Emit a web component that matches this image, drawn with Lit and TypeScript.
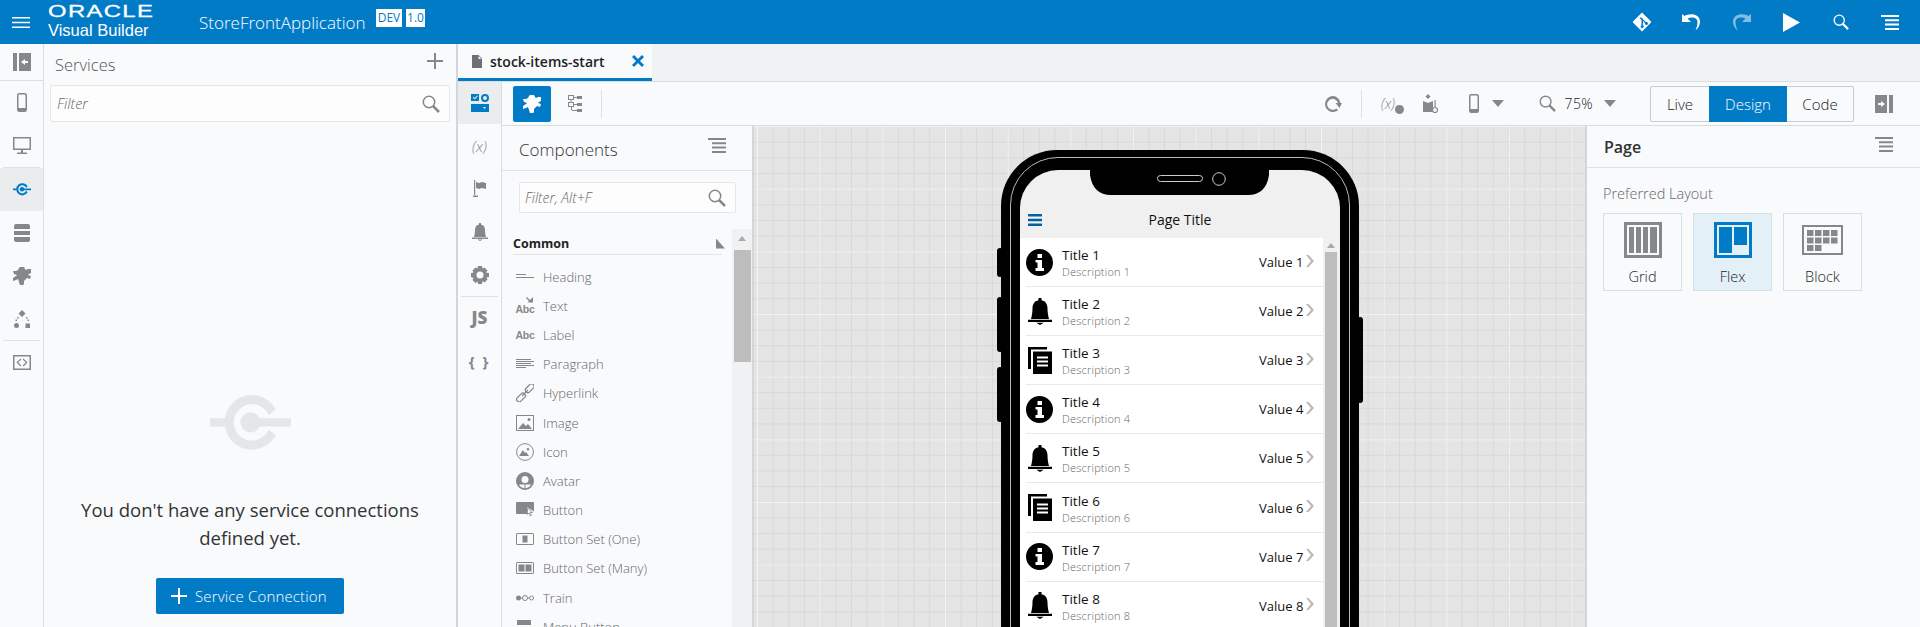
import { LitElement, html, css, svg } from "lit";
import { customElement } from "lit/decorators.js";

const ic = (w: number, h: number, body: unknown, cls = "") =>
  html`<svg class="ic ${cls}" width=${w} height=${h} viewBox="0 0 ${w} ${h}" fill="currentColor">${body}</svg>`;

const puzzlePath =
  "M6 1L7 0H11L12 2L13 3L15 2H18V6L16 7L15 8L18 9L17 12L14 11L13 12L11 14V17L10 18H7L6 15L5 12L3 13L0 14V11L3 9L4 8L1 7L0 4H3L5 3Z";

const icons = {
  collapse: () => ic(18, 18, svg`<path d="M0 0h4v18H0zM6 0h12v18H6zM8 9l4-3v2h3v2h-3v2z" fill-rule="evenodd"/>`),
  expand: () => ic(18, 18, svg`<path d="M14 0h4v18h-4zM0 0h12v18H0zM10 9L6 6v2H3v2h3v2z" fill-rule="evenodd"/>`),
  phone: () => ic(10, 19, svg`<rect x=".75" y=".75" width="8.500" height="17.500" rx="1.500" fill="none" stroke="currentColor" stroke-width="1.500"/><path d="M1 15h8v3H1z"/>`),
  desktop: () => ic(18, 17, svg`<path d="M0 0h18v13H0zM1.500 1.500v10h15v-10zM8 13h2v2.500H8zM4 15.500h10V17H4z" fill-rule="evenodd"/>`),
  service: (s = 18) => html`<svg class="ic" width=${s} height=${s * 0.7} viewBox="0 0 80 54" fill="currentColor"><path d="M0 23h16v8H0zM42 23h38v8H42z" /><circle cx="40" cy="27" r="10"/><path d="M65 14A27 27 0 1 0 65 40L58 34A18 18 0 1 1 58 20z"/></svg>`,
  db: () => ic(16, 18, svg`<path d="M2 0h12q2 0 2 2v3H0V2q0-2 2-2zM0 7h16v4H0zM0 13h16v3q0 2-2 2H2q-2 0-2-2z"/>`),
  puzzle: () => ic(18, 18, svg`<path d=${puzzlePath}/>`),
  flow: () => ic(16, 18, svg`<path d="M8 0l3.500 3.500L8 7 4.500 3.500zM2.500 13a2.500 2.500 0 1 1 0 5 2.500 2.500 0 0 1 0-5zM11.500 13.500H16V18h-4.500zM3 7h1.500v1.500H3zM1.500 9.500H3V11H1.500zM12 7h1.500v1.500H12zM13.500 9.500H15V11h-1.500z"/>`),
  code: () => ic(18, 15, svg`<path d="M0 0h18v15H0zM1.500 1.500v12h15v-12zM7.500 3.500L3.500 7.500l4 4 .8-1-3-3 3-3zM10.500 3.500l4 4-4 4-.8-1 3-3-3-3z" fill-rule="evenodd"/>`),
  file: () => ic(10, 13, svg`<path d="M0 0h6.500L10 3.500V13H0zM6.500 1v3h3z" fill-rule="evenodd"/>`),
  close: () => ic(12, 12, svg`<path d="M2 0l4 4 4-4 2 2-4 4 4 4-2 2-4-4-4 4-2-2 4-4-4-4z"/>`),
  comps: () => ic(18, 18, svg`<path d="M0 0h8v7H0zM1.800 3.500l2 2L7 2l-.8-.6L3.800 4 2.500 2.800zM14 0a4 4 0 1 1 0 8 4 4 0 0 1 0-8zm0 2a2 2 0 1 0 0 4 2 2 0 0 0 0-4zM0 10h18v8H0zm12 3l1.500 2 1.500-2z" fill-rule="evenodd"/>`),
  flag: () => ic(14, 18, svg`<path d="M1 0h1.200v15H1zM0 15.500h5V17H0zM3 2l3 1 3-1 4 1v6l-4-1-3 1-3-1z"/>`),
  bell: (s = 16) => html`<svg class="ic" width=${s} height=${s * 1.125} viewBox="0 0 16 18" fill="currentColor"><path d="M7 0h2v1.500C12 2 13 4.500 13 7c0 3 .5 5 1 7H2c.5-2 1-4 1-7 0-2.500 1-5 4-5.500zM0 14.500h16V16H0zM5.500 16.500h5L8 18z"/></svg>`,
  gear: () => ic(18, 18, svg`<path d="M7 0h4l.5 2.500 2-1 3 3-1.500 2L18 7v4l-2.500.5 1 2-3 3-2-1.500L11 18H7l-.5-2.500-2 1.500-3-3 1-2L0 11V7l2.500-.5-1-2 3-3 2 1zM9 5.500a3.500 3.500 0 1 0 0 7 3.500 3.500 0 0 0 0-7z" fill-rule="evenodd"/>`),
  search: (s = 18) => html`<svg class="ic" width=${s} height=${s} viewBox="0 0 18 18" fill="none" stroke="currentColor"><circle cx="7" cy="7" r="5.700" stroke-width="1.500"/><path d="M11 11l6 6" stroke-width="2.500"/></svg>`,
  plus: (s = 16) => html`<svg class="ic" width=${s} height=${s} viewBox="0 0 16 16" fill="currentColor"><path d="M7 0h2v7h7v2H9v7H7V9H0V7h7z"/></svg>`,
  menu: () => ic(18, 15, svg`<path d="M0 0h18v2H0zM4 4.300h14v2H4zM4 8.600h14v2H4zM4 13h14v2H4z"/>`),
  burger: () => ic(18, 11, svg`<path d="M0 0h18v1.500H0zM0 4.700h18v1.500H0zM0 9.500h18V11H0z"/>`),
  git: () => ic(20, 20, svg`<path d="M10 .5l9 9a.8.8 0 0 1 0 1l-9 9-9-9a.8.8 0 0 1 0-1zM8.500 5l-1 1 2 2v5.300a1.500 1.500 0 1 0 1.500 0V9l2 2a1.500 1.500 0 1 0 1-1L11 7.500A1.500 1.500 0 0 0 9 6z" fill-rule="evenodd"/>`),
  undo: () => ic(19, 18, svg`<path d="M0 9V1l2.500 2C7 0 18 0 18 9c0 3-2 6.500-4.500 8.500 1-2.500 2-5.500 2-8.500 0-4.500-6-5.500-10-3.500L9 9z"/>`),
  redo: () => ic(19, 18, svg`<path d="M19 9V1l-2.500 2C12 0 1 0 1 9c0 3 2 6.500 4.500 8.500-1-2.500-2-5.500-2-8.500 0-4.500 6-5.500 10-3.500L10 9z"/>`),
  play: () => ic(17, 19, svg`<path d="M0 0l17 9.500L0 19z"/>`),
  refresh: () => ic(18, 18, svg`<path d="M9 1a8 8 0 1 0 5 14.300l-1.600-1.900A5.500 5.500 0 1 1 14 8h-2.500l4 5 2.500-5h-1.500A8 8 0 0 0 9 1z"/>`),
  person: () => ic(16, 20, svg`<path d="M5 0l2.500 2.500L5 5 2.500 2.500zM0 7l5 2 5-2v11H0z"/><path d="M11.500 6h1.200v7h-1.200z"/><circle cx="12" cy="16" r="2.500" fill="none" stroke="currentColor" stroke-width="1.200"/>`),
  heading: () => ic(18, 8, svg`<path d="M0 1h10v1H0zM0 4h18v1H0z" />`),
  abcArrow: () => html`<span class="abc-wrap">${ic(7, 7, svg`<path d="M7 0v5.500H1.500L3 4 0 1l1-1 3 3z"/>`, "abc-arrow")}<span class="abc">Abc</span></span>`,
  abc: () => html`<span class="abc">Abc</span>`,
  para: () => ic(18, 10, svg`<path d="M0 0h15v1H0zM0 2h18v1H0zM0 4h15v1H0zM0 6h18v1H0zM0 8h10v1H0z"/>`),
  link: () => ic(18, 18, svg`<g fill="none" stroke="currentColor" stroke-width="1.300"><rect x="8" y="1" width="10" height="5" rx="2" transform="rotate(-45 13 3.500) translate(0 1)"/><rect x="0" y="11" width="10" height="5" rx="2" transform="rotate(-45 5 13.500)"/><path d="M6 12l6-6"/></g>`),
  image: () => ic(18, 16, svg`<path d="M0 0h18v16H0zM1 1v14h16V1zM2 14l5-6 3 3 2-2 4 5zM13 3a1.500 1.500 0 1 1 0 3 1.500 1.500 0 0 1 0-3z" fill-rule="evenodd"/>`),
  icon: () => ic(18, 18, svg`<circle cx="9" cy="9" r="8.400" fill="none" stroke="currentColor"/><path d="M3 13l4-6 2 3 1-1 3 4zM12 5a1.300 1.300 0 1 1 0 2.600A1.300 1.300 0 0 1 12 5z"/>`),
  avatar: () => ic(18, 18, svg`<path d="M9 0a9 9 0 1 1 0 18A9 9 0 0 1 9 0zM9 4a3.500 3.500 0 1 0 0 7 3.500 3.500 0 0 0 0-7zM3 12.500c1 2 3 3.400 5.500 3.800V12.500zM15 12.500H9.500v3.800c2.500-.4 4.500-1.800 5.500-3.800z" fill-rule="evenodd"/>`),
  button: () => ic(18, 16, svg`<path d="M1 0h16q1 0 1 1v8.500L11 5v7H1q-1 0-1-1V1q0-1 1-1z"/><path d="M11.500 6l5 4.500h-2.500l1.500 3-1 .5-1.500-3-1.500 1.500z" fill="none" stroke="currentColor" stroke-width=".8"/>`),
  setOne: () => ic(18, 12, svg`<path d="M1.500 0h15Q18 0 18 1.500v9q0 1.500-1.500 1.500h-15Q0 12 0 10.500v-9Q0 0 1.500 0zM1 1v10h16V1zM6.500 2.500h5v7h-5z" fill-rule="evenodd"/>`),
  setMany: () => ic(18, 12, svg`<path d="M1.500 0h15Q18 0 18 1.500v9q0 1.500-1.500 1.500h-15Q0 12 0 10.500v-9Q0 0 1.500 0zM1 1v10h16V1zM2.500 2.500h6v7h-6zM9.500 2.500h6v7h-6z" fill-rule="evenodd"/>`),
  train: () => ic(18, 6, svg`<circle cx="2.500" cy="3" r="2.500"/><path d="M5 2.500h13v1H5z"/><circle cx="9" cy="3" r="2.500" stroke="currentColor" fill="#f9fafc"/><circle cx="15.500" cy="3" r="2" stroke="currentColor" fill="#f9fafc"/>`),
  menuBtn: () => ic(18, 14, svg`<path d="M1 0h14v5H1zM0 7h18v3H0zM0 11h2v3H0z"/>`),
  tree: () => ic(14, 18, svg`<path d="M0 0h6v5H0zm1 1v3h4V1zM9 1h5v3H9zM0 7h6v5H0zm1 1v3h4V8zM9 8h5v3H9zM9 14h5v3H9zM2.500 5h1v2h-1zM3 12h1v3H3zM6 2h3v1H6zM6 9h3v1H6zM4 15h5v1H4z" fill-rule="evenodd"/>`),
  info: () => html`<svg class="ic" width="27" height="27" viewBox="0 0 27 27" fill="currentColor"><path fill-rule="evenodd" d="M13.500 0a13.500 13.500 0 1 1 0 27 13.500 13.500 0 0 1 0-27zM11.500 5v4h4.500V5zM9.500 11v2.500h2V19h-2v3h8.500v-3h-2v-8z"/></svg>`,
  docs: () => ic(24, 27, svg`<path fill-rule="evenodd" d="M0 0h19v2.500H3V22H0zM5 4.500h19V27H5zM9 9.500v2h11v-2zM9 13.500v2h11v-2zM9 17.500v2h11v-2z"/>`),
  chevron: () => ic(8, 12, svg`<path d="M0 0h2.500L8 6l-5.500 6H0l5-6z"/>`),
};

const components: [string, () => unknown][] = [
  ["Heading", icons.heading],
  ["Text", icons.abcArrow],
  ["Label", icons.abc],
  ["Paragraph", icons.para],
  ["Hyperlink", icons.link],
  ["Image", icons.image],
  ["Icon", icons.icon],
  ["Avatar", icons.avatar],
  ["Button", icons.button],
  ["Button Set (One)", icons.setOne],
  ["Button Set (Many)", icons.setMany],
  ["Train", icons.train],
  ["Menu Button", icons.menuBtn],
];

const rowIcons = [icons.info, () => icons.bell(24), icons.docs];
const rows = Array.from({ length: 9 }, (_, i) => i + 1);

@customElement("app-root")
export class AppRoot extends LitElement {
  static styles = css`
    :host {
      display: block;
      width: 1920px;
      height: 627px;
      overflow: hidden;
      font-family: "Open Sans", "Noto Sans", sans-serif;
      color: #333;
      background: #f9fafc;
    }
    .ic { display: block; flex: none; }

    .top {
      height: 44px;
      background: #027bc7;
      color: #fff;
      display: flex;
      align-items: center;
    }
    .burger { margin-left: 12px; width: 18px; }
    .logo { margin-left: 18px; width: 118px; display: flex; flex-direction: column; }
    .oracle {
      font: 400 17px/14px "Liberation Sans", sans-serif;
      letter-spacing: 1px;
      transform: scaleX(1.4);
      transform-origin: 0 50%;
      margin-top: -1px;
      -webkit-text-stroke: 0.3px #fff;
    }
    .vb { font: 16.500px/17px "Liberation Sans", sans-serif; margin-top: 3px; white-space: nowrap; }
    .app { margin-left: 33px; font-size: 17px; font-weight: 300; width: 177px; }
    .badge {
      background: #fff;
      color: #027bc7;
      height: 18px;
      font-size: 12px;
      line-height: 18px;
      text-align: center;
      margin-top: -8px;
      margin-right: 4px;
    }
    .badge.dev { width: 26px; }
    .badge.ver { width: 19px; }
    .top-actions { margin-left: auto; display: flex; align-items: center; margin-right: 5px; }
    .top-cell { width: 49.600px; display: flex; justify-content: center; }
    .dim { opacity: 0.5; }

    .main { display: flex; height: 583px; }

    .rail {
      width: 43px;
      flex: none;
      border-right: 1px solid #d8dee4;
      display: flex;
      flex-direction: column;
      align-items: stretch;
      color: #85888b;
    }
    .rail-item {
      height: 43px;
      flex: none;
      display: flex;
      align-items: center;
      justify-content: center;
    }
    .rail-item.first { height: 36px; border-bottom: 1px solid #d8dee4; }
    .rail-item.active { background: #ebecee; color: #027bc7; }
    .rail-sep { height: 1px; background: #dfe1e4; margin: 0 3px; flex: none; }

    .services {
      width: 412px;
      flex: none;
      border-right: 2px solid #d3d6da;
      background: #f9fafc;
      display: flex;
      flex-direction: column;
    }
    .svc-head {
      height: 41px;
      display: flex;
      align-items: center;
      justify-content: space-between;
      padding: 0 13px 0 11px;
      font-size: 16.500px;
      font-weight: 300;
      color: #555;
      box-sizing: border-box;
    }
    .svc-head .ic { color: #85888b; margin-top: -8px; }
    .filter {
      display: flex;
      align-items: center;
      justify-content: space-between;
      background: #fdfdfd;
      border: 1px solid #e4e6e9;
      border-radius: 2px;
      font-size: 14.500px;
      font-style: italic;
      font-weight: 300;
      color: #666;
      box-sizing: border-box;
      padding: 0 9px 0 6px;
    }
    .filter .ic { color: #85888b; }
    .svc-filter { height: 37px; margin: 0 6px; }
    .empty {
      flex: 1;
      display: flex;
      flex-direction: column;
      align-items: center;
      color: #e5e6e7;
      padding-top: 272px;
    }
    .empty-msg {
      width: 360px;
      text-align: center;
      font-size: 18.500px;
      line-height: 28px;
      color: #333;
      margin-top: 45px;
    }
    .cta {
      margin-top: 26px;
      width: 188px;
      height: 36px;
      background: #027bc7;
      border-radius: 2px;
      color: #fff;
      display: flex;
      align-items: center;
      gap: 8px;
      padding-left: 15px;
      box-sizing: border-box;
      font-size: 15px;
      letter-spacing: 0.15px;
      font-weight: 300;
      white-space: nowrap;
    }

    .editor { flex: 1; min-width: 0; display: flex; flex-direction: column; }
    .tabs {
      height: 37px;
      flex: none;
      background: #f1f2f4;
      border-bottom: 1px solid #d8dce0;
    }
    .tab {
      width: 194px;
      height: 37px;
      background: #f9fafc;
      border-bottom: 3px solid #027bc7;
      box-sizing: border-box;
      display: flex;
      align-items: center;
      padding-left: 14px;
      font-size: 14px;
      font-weight: 600;
      color: #222;
      white-space: nowrap;
    }
    .tab .file { color: #6d6f72; margin-right: 8px; display: flex; }
    .tab .x { color: #027bc7; margin-left: auto; margin-right: 8px; display: flex; }

    .editor-body { flex: 1; display: flex; min-height: 0; }
    .rail2 {
      width: 43px;
      flex: none;
      border-right: 1px solid #d8dee4;
      display: flex;
      flex-direction: column;
      color: #85888b;
    }
    .rail2 .rail-item { font-weight: 700; }
    .rail2 .rail-item.active { height: 42px; }
    .rail2 .var { font: italic 300 15px "Open Sans", sans-serif; }
    .rail2 .rail-item.js { font-size: 17px; font-weight: 800; height: 40px; }
    .rail2 .rail-item.braces { font-size: 15px; letter-spacing: 2px; margin-top: 2px; }

    .work { flex: 1; min-width: 0; display: flex; flex-direction: column; }
    .toolbar {
      height: 44px;
      flex: none;
      box-sizing: border-box;
      border-bottom: 1px solid #d8dce0;
      display: flex;
      align-items: center;
      color: #85888b;
      padding-left: 11px;
    }
    .tool-on {
      width: 38px;
      height: 36px;
      background: #027bc7;
      border-radius: 2px;
      color: #fff;
      display: flex;
      align-items: center;
      justify-content: center;
    }
    .tool-flow { margin-left: 17px; }
    .vsep { width: 1px; height: 28px; background: #dcdee1; flex: none; }
    .vsep.flow-sep { margin-left: 19px; }
    .vsep.refresh-sep { margin: 0 6px 0 19px; }
    .tri {
      width: 0;
      height: 0;
      border: 6px solid transparent;
      border-top: 7px solid #85888b;
      border-bottom: 0;
    }
    .tool-right { margin-left: auto; display: flex; align-items: center; }
    .tool-cell { width: 45px; display: flex; justify-content: center; position: relative; }
    .tool-cell.tool-var { width: 41px; font: italic 300 14px "Open Sans", sans-serif; }
    .var-dot {
      position: absolute;
      left: 27px;
      top: 11px;
      width: 9px;
      height: 9px;
      border-radius: 50%;
      background: #85888b;
    }
    .tool-phone { margin: 0 13px 0 15px; }
    .tool-search { margin-left: 35px; }
    .zoom-val { font-size: 14px; color: #222; font-weight: 300; margin: 0 11px 0 9px; letter-spacing: 0.4px; }
    .seg {
      display: flex;
      height: 36px;
      border: 1px solid #c9cbce;
      border-radius: 2px;
      box-sizing: border-box;
      font-size: 15px;
      color: #222;
      font-weight: 300;
      width: 204px;
      margin-left: 34px;
      background: #f9fafc;
    }
    .seg div { display: flex; align-items: center; justify-content: center; }
    .seg .live { width: 58px; }
    .seg .design { width: 78px; background: #027bc7; color: #fff; margin: -1px 0; }
    .seg .code { flex: 1; }
    .tool-expand { margin: 0 27px 0 21px; }

    .split { flex: 1; display: flex; min-height: 0; }
    .palette {
      width: 252px;
      flex: none;
      display: flex;
      flex-direction: column;
      background: #f9fafc;
      border-right: 2px solid #d3d6da;
      box-sizing: border-box;
    }
    .pal-head {
      height: 45px;
      flex: none;
      display: flex;
      align-items: center;
      justify-content: space-between;
      padding: 2px 26px 0 17px;
      border-bottom: 1px solid #dfe2e6;
      font-size: 17px;
      font-weight: 300;
      color: #333;
      box-sizing: border-box;
    }
    .pal-head .ic { color: #85888b; margin-top: -7px; }
    .pal-filter { height: 31px; margin: 11px 16px 0 17px; flex: none; font-size: 14px; padding-left: 5px; }
    .pal-body { flex: 1; display: flex; margin-top: 16px; min-height: 0; overflow: hidden; }
    .pal-list { flex: 1; padding: 1px 10px 0 11px; min-width: 0; }
    .pal-section {
      height: 25px;
      display: flex;
      align-items: center;
      justify-content: space-between;
      font-size: 12.500px;
      font-weight: 700;
      color: #222;
      border-bottom: 1px solid #e2e4e7;
      box-sizing: border-box;
      padding-top: 3px;
    }
    .corner { width: 9px; height: 10px; background: #85888b; clip-path: polygon(0 0, 100% 100%, 0 100%); margin-right: -3px; }
    .pal-items { margin-top: 7px; }
    .pal-item {
      height: 29.200px;
      display: flex;
      align-items: center;
      font-size: 13px;
      font-weight: 300;
      color: #63666a;
      white-space: nowrap;
    }
    .pal-icon { width: 18px; margin: 0 9px 0 3px; color: #85888b; display: flex; justify-content: center; flex: none; }
    .abc { font: 700 10.500px/10px "Liberation Sans", sans-serif; letter-spacing: -0.2px; color: #85888b; }
    .abc-wrap { display: flex; flex-direction: column; align-items: flex-end; width: 18px; }
    .abc-wrap .abc { align-self: center; }
    .abc-arrow { margin-right: 1px; }
    .scroll {
      width: 20px;
      flex: none;
      background: #f0f1f2;
      display: flex;
      flex-direction: column;
      align-items: center;
    }
    .scroll .up {
      margin-top: 7px;
      width: 0;
      height: 0;
      border: 4.500px solid transparent;
      border-bottom: 5px solid #a9abad;
      border-top: 0;
    }
    .thumb { width: 17px; height: 112px; background: #bdbdbd; margin-top: 9px; }

    .canvas {
      flex: 1;
      min-width: 0;
      overflow: hidden;
      box-sizing: border-box;
      padding: 24px 0 0 247px;
      background-color: #e4e4e4;
      background-image:
        linear-gradient(#f4f4f4 1px, transparent 1px),
        linear-gradient(90deg, #f4f4f4 1px, transparent 1px),
        linear-gradient(#d7d7d7 1px, transparent 1px),
        linear-gradient(90deg, #d7d7d7 1px, transparent 1px);
      background-size: 62.670px 62.670px, 62.670px 62.670px, 15.667px 15.667px, 15.667px 15.667px;
      background-position: 3px 0, 3px 0, 3px 0, 3px 0;
    }
    .phone {
      position: relative;
      width: 358px;
      height: 720px;
      box-sizing: border-box;
      background: #000;
      border-radius: 56px;
      padding: 7px 9px 0 9px;
    }
    .phone-line {
      border: 1px solid #b9b9b9;
      border-radius: 48px;
      background: #000;
      padding: 12px 9px 0 9px;
      height: 720px;
      box-sizing: border-box;
    }
    .side { position: absolute; background: #000; width: 6px; border-radius: 3px; }
    .side.l { left: -4px; }
    .side.r { right: -4px; }
    .side.a { top: 98px; height: 29px; }
    .side.b { top: 147px; height: 55px; }
    .side.c { top: 217px; height: 55px; }
    .side.d { top: 167px; height: 86px; }
    .screen {
      background: #f0f0f0;
      border-radius: 38px 38px 0 0;
      height: 700px;
      position: relative;
      overflow: hidden;
    }
    .notch { position: absolute; left: 70px; top: 0; display: block; }
    .page-head {
      height: 68px;
      display: flex;
      align-items: center;
      justify-content: center;
      padding-top: 30px;
      box-sizing: border-box;
      position: relative;
      font-size: 14px;
      color: #111;
    }
    .page-menu { position: absolute; left: 8px; top: 44px; color: #05619e; }
    .list-wrap { display: flex; }
    .list { width: 303px; background: #fff; flex: none; }
    .row {
      height: 49.100px;
      display: flex;
      align-items: center;
      box-sizing: border-box;
      margin-left: 6px;
      border-bottom: 1px solid #e9e9e9;
    }
    .row-icon { width: 27px; color: #000; display: flex; justify-content: center; flex: none; }
    .row-text { margin-left: 9px; flex: 1; padding-top: 2px; }
    .row-title { font-size: 13.500px; line-height: 17px; color: #111; }
    .row-desc { font-size: 11px; line-height: 15px; color: #666; font-weight: 300; letter-spacing: 0.2px; }
    .row-val { font-size: 13px; color: #111; margin-right: 6px; width: 41px; white-space: nowrap; }
    .row-chev { color: #b9b9b9; margin-right: 9px; margin-top: -3px; }
    .lscroll { width: 16px; display: flex; flex-direction: column; align-items: center; }
    .lscroll .up { margin-top: 5px; width: 0; height: 0; border: 4px solid transparent; border-bottom: 5px solid #a9a9a9; border-top: 0; }
    .lscroll .bar { width: 12px; height: 400px; background: #bdbdbd; margin-top: 4px; }

    .props {
      flex: none;
      width: 335px;
      box-sizing: border-box;
      border-left: 2px solid #d3d6da;
      background: #f9fafc;
    }
    .props-head {
      height: 42px;
      display: flex;
      align-items: center;
      justify-content: space-between;
      padding: 0 27px 0 17px;
      border-bottom: 1px solid #dfe2e6;
      box-sizing: border-box;
      font-size: 16px;
      font-weight: 600;
      color: #333;
    }
    .props-head .ic { color: #85888b; margin-top: -5px; }
    .props-label { font-size: 14.500px; font-weight: 300; color: #666; margin: 16px 0 0 16px; line-height: 20px; }
    .tiles { display: flex; gap: 11px; margin: 9px 0 0 16px; }
    .tile {
      width: 79px;
      height: 78px;
      box-sizing: border-box;
      border: 1px solid #d5dfe8;
      display: flex;
      flex-direction: column;
      align-items: center;
      font-size: 14.500px;
      font-weight: 300;
      color: #222;
    }
    .tile.on { background: #e4f0f8; }
    .tile-art { height: 52px; display: flex; align-items: center; justify-content: center; color: #85888b; }
    .tile.on .tile-art { color: #027bc7; }
    .tile-name { margin-top: 1px; }
  `;

  private renderRow(n: number) {
    const icon = rowIcons[(n - 1) % 3];
    return html`<div class="row">
      <div class="row-icon">${icon()}</div>
      <div class="row-text">
        <div class="row-title">Title ${n}</div>
        <div class="row-desc">Description ${n}</div>
      </div>
      <div class="row-val">Value ${n}</div>
      <div class="row-chev">${icons.chevron()}</div>
    </div>`;
  }

  private renderPhone() {
    return html`<div class="phone">
      <div class="side l a"></div>
      <div class="side l b"></div>
      <div class="side l c"></div>
      <div class="side r d"></div>
      <div class="phone-line">
        <div class="screen">
          <div class="page-head">
            <div class="page-menu">${ic(14, 12, svg`<path d="M1 0h12a1 1 0 0 1 0 2.600H1a1 1 0 0 1 0-2.600zM0 4.700h14v2.600H0zM1 9.400h12a1 1 0 0 1 0 2.600H1a1 1 0 0 1 0-2.600z"/>`)}</div>
            <div>Page Title</div>
          </div>
          <div class="list-wrap">
            <div class="list">${rows.map((n) => this.renderRow(n))}</div>
            <div class="lscroll"><div class="up"></div><div class="bar"></div></div>
          </div>
          <svg class="notch" width="179" height="25" viewBox="0 0 179 25">
            <path d="M0 0H179V5Q176 25 158 25H21Q3 25 0 5Z" fill="#000"/>
            <rect x="67.500" y="5.500" width="45" height="6" rx="3" fill="none" stroke="#ccc"/>
            <circle cx="129" cy="9" r="6.300" fill="none" stroke="#ccc"/>
          </svg>
        </div>
      </div>
    </div>`;
  }

  private renderGridArt() {
    return ic(38, 36, svg`<path fill-rule="evenodd" d="M0 0h38v36H0zM3 3v30h32V3z"/><path d="M5 5h5v26H5zM12 5h5v26h-5zM19 5h5v26h-5zM26 5h7v26h-7z"/>`);
  }

  private renderFlexArt() {
    return ic(38, 36, svg`<path fill-rule="evenodd" d="M0 0h38v36H0zM3 3v30h32V3z"/><path d="M5 5h13v26H5zM20 5h13v18H20z"/>`);
  }

  private renderBlockArt() {
    const cells = [];
    for (let y = 0; y < 3; y++) {
      for (let x = 0; x < (y === 2 ? 2 : 4); x++) {
        cells.push(svg`<rect x=${5 + x * 8} y=${5 + y * 7.500} width="6.500" height="6"/>`);
      }
    }
    return ic(41, 30, svg`<path fill-rule="evenodd" d="M0 0h41v30H0zM2 2v26h37V2z"/>${cells}`);
  }

  render() {
    return html`
      <div class="top">
        <div class="burger">${icons.burger()}</div>
        <div class="logo">
          <div class="oracle">ORACLE</div>
          <div class="vb">Visual Builder</div>
        </div>
        <div class="app">StoreFrontApplication</div>
        <div class="badge dev">DEV</div>
        <div class="badge ver">1.0</div>
        <div class="top-actions">
          <div class="top-cell">${icons.git()}</div>
          <div class="top-cell">${icons.undo()}</div>
          <div class="top-cell dim">${icons.redo()}</div>
          <div class="top-cell">${icons.play()}</div>
          <div class="top-cell">${icons.search(16)}</div>
          <div class="top-cell">${icons.menu()}</div>
        </div>
      </div>
      <div class="main">
        <div class="rail">
          <div class="rail-item first">${icons.collapse()}</div>
          <div class="rail-item">${icons.phone()}</div>
          <div class="rail-item">${icons.desktop()}</div>
          <div class="rail-sep"></div>
          <div class="rail-item active">${icons.service(18)}</div>
          <div class="rail-item">${icons.db()}</div>
          <div class="rail-item">${icons.puzzle()}</div>
          <div class="rail-item">${icons.flow()}</div>
          <div class="rail-sep"></div>
          <div class="rail-item">${icons.code()}</div>
        </div>
        <div class="services">
          <div class="svc-head"><span>Services</span>${icons.plus(16)}</div>
          <div class="filter svc-filter"><span>Filter</span>${icons.search(18)}</div>
          <div class="empty">
            ${icons.service(81)}
            <div class="empty-msg">You don't have any service connections defined yet.</div>
            <div class="cta">${icons.plus(16)}<span>Service Connection</span></div>
          </div>
        </div>
        <div class="editor">
          <div class="tabs">
            <div class="tab">
              <span class="file">${icons.file()}</span>stock-items-start
              <span class="x">${icons.close()}</span>
            </div>
          </div>
          <div class="editor-body">
            <div class="rail2">
              <div class="rail-item active">${icons.comps()}</div>
              <div class="rail-item var">(x)</div>
              <div class="rail-item">${icons.flag()}</div>
              <div class="rail-item">${icons.bell(16)}</div>
              <div class="rail-item">${icons.gear()}</div>
              <div class="rail-sep"></div>
              <div class="rail-item js">JS</div>
              <div class="rail-item braces">{ }</div>
            </div>
            <div class="work">
              <div class="toolbar">
                <div class="tool-on">${icons.puzzle()}</div>
                <div class="tool-flow">${icons.tree()}</div>
                <div class="vsep flow-sep"></div>
                <div class="tool-right">
                  ${icons.refresh()}
                  <div class="vsep refresh-sep"></div>
                  <div class="tool-cell tool-var">(x)<span class="var-dot"></span></div>
                  <div class="tool-cell">${icons.person()}</div>
                  <div class="tool-phone">${icons.phone()}</div>
                  <div class="tri"></div>
                  <div class="tool-search">${icons.search(17)}</div>
                  <span class="zoom-val">75%</span>
                  <div class="tri"></div>
                  <div class="seg">
                    <div class="live">Live</div>
                    <div class="design">Design</div>
                    <div class="code">Code</div>
                  </div>
                  <div class="tool-expand">${icons.expand()}</div>
                </div>
              </div>
              <div class="split">
                <div class="palette">
                  <div class="pal-head"><span>Components</span>${icons.menu()}</div>
                  <div class="filter pal-filter"><span>Filter, Alt+F</span>${icons.search(18)}</div>
                  <div class="pal-body">
                    <div class="pal-list">
                      <div class="pal-section"><span>Common</span><div class="corner"></div></div>
                      <div class="pal-items">
                        ${components.map(
                          ([name, icon]) => html`<div class="pal-item"><span class="pal-icon">${icon()}</span>${name}</div>`
                        )}
                      </div>
                    </div>
                    <div class="scroll"><div class="up"></div><div class="thumb"></div></div>
                  </div>
                </div>
                <div class="canvas">${this.renderPhone()}</div>
                <div class="props">
                  <div class="props-head"><span>Page</span>${icons.menu()}</div>
                  <div class="props-label">Preferred Layout</div>
                  <div class="tiles">
                    <div class="tile"><div class="tile-art">${this.renderGridArt()}</div><div class="tile-name">Grid</div></div>
                    <div class="tile on"><div class="tile-art">${this.renderFlexArt()}</div><div class="tile-name">Flex</div></div>
                    <div class="tile"><div class="tile-art">${this.renderBlockArt()}</div><div class="tile-name">Block</div></div>
                  </div>
                </div>
              </div>
            </div>
          </div>
        </div>
      </div>
    `;
  }
}
